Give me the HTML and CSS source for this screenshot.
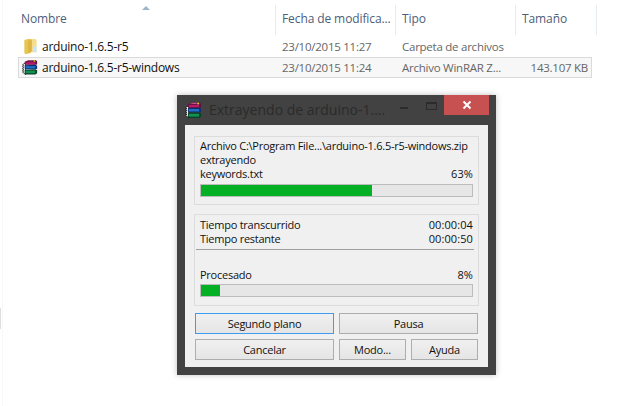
FILE: index.html
```html
<!DOCTYPE html>
<html lang="es">
  <head>
    <meta charset="utf-8" />
    <title>Extrayendo de arduino-1.6.5-r5-windows.zip</title>
    <link rel="stylesheet" href="styles.css">
  </head>
  <body>
    <svg class="defs" width="0" height="0">
      <symbol id="rar" viewBox="0 0 18 18">
        <path d="M2 5 L0.5 6 L2 7 L0.5 8 L2 9 L0.5 10 L2 11 L0.5 12 L2 13 L0.5 14 L4 17 V4 Z" fill="#fff" stroke="#111" stroke-width=".9"/>
        <path d="M3 2.500 L8 .5 H15.500 L17 2 V5.500 L15 6 H4 L3 5 Z" fill="#5c1040"/>
        <path d="M5 1.800 L8.500 .8 H14.500 L11 2 Z" fill="#c85a8c"/>
        <path d="M4 3 H15 V5.500 H4 Z" fill="#b81a68"/>
        <path d="M3 6.500 L15 6 L17 7 V10.500 L15 11 H4 L3 10 Z" fill="#0c2f70"/>
        <path d="M4 7.500 H15 V10 H4 Z" fill="#2270c8"/>
        <path d="M3 11.500 L15 11 L17 12 V15.500 L15 17 H4 L3 16 Z" fill="#0a4028"/>
        <path d="M4 12.500 H15 V15.500 H4 Z" fill="#149050"/>
        <path d="M13 .8 H15 V2.500 H13 Z" fill="#e8c820"/>
      </symbol>
    </svg>

    <div class="edge"></div>
    <div class="edge-mark"></div>

    <div class="explorer">
      <div class="sort-arrow"></div>
      <div class="row header">
        <div class="col col-name">Nombre</div>
        <div class="col col-date">Fecha de modifica...</div>
        <div class="col col-type">Tipo</div>
        <div class="col col-size">Tamaño</div>
      </div>
      <div class="row file">
        <div class="col col-name">
          <svg class="file-icon" viewBox="0 0 16 18">
            <path d="M2 2 L6 1 H9 V16 L4 17 H3 L2 16 Z" fill="#e8c552"/>
            <path d="M9 1 H14 L15 3 V15 H9 Z" fill="#f4dd8c"/>
            <path d="M6 3 L10 1.500 V14 L6 16 Z" fill="#dcb545"/>
            <path d="M11 9 H15 V15 H11 Z" fill="#cfe4f2"/>
          </svg>
          <span>arduino-1.6.5-r5</span>
        </div>
        <div class="col col-date">23/10/2015 11:27</div>
        <div class="col col-type">Carpeta de archivos</div>
        <div class="col col-size"></div>
      </div>
      <div class="row file selected">
        <div class="col col-name">
          <svg class="file-icon"><use href="#rar"/></svg>
          <span>arduino-1.6.5-r5-windows</span>
        </div>
        <div class="col col-date">23/10/2015 11:24</div>
        <div class="col col-type">Archivo WinRAR Z...</div>
        <div class="col col-size">143.107 KB</div>
      </div>
    </div>

    <div class="window">
      <div class="titlebar">
        <svg class="title-icon"><use href="#rar"/></svg>
        <div class="title">Extrayendo de arduino-1....</div>
        <div class="win-min"></div>
        <div class="win-max"></div>
        <div class="win-close">
          <svg viewBox="0 0 10 10" width="10" height="10">
            <path d="M1.500 1.500 L8.500 8.500 M8.500 1.500 L1.500 8.500" stroke="#fff" stroke-width="2"/>
          </svg>
        </div>
      </div>
      <div class="client">
        <div class="group group-file">
          <div class="line">Archivo C:\Program File...\arduino-1.6.5-r5-windows.zip</div>
          <div class="line">extrayendo</div>
          <div class="line between"><span>keywords.txt</span><span>63%</span></div>
          <div class="progress"><div class="progress-fill" style="width: 63%"></div></div>
        </div>
        <div class="group group-time">
          <div class="line between"><span>Tiempo transcurrido</span><span>00:00:04</span></div>
          <div class="line between"><span>Tiempo restante</span><span>00:00:50</span></div>
          <div class="divider"></div>
          <div class="line between"><span>Procesado</span><span>8%</span></div>
          <div class="progress"><div class="progress-fill" style="width: 7%"></div></div>
        </div>
        <div class="buttons">
          <button class="btn btn-wide btn-focus">Segundo plano</button>
          <button class="btn btn-wide">Pausa</button>
          <button class="btn btn-wide">Cancelar</button>
          <div class="btn-pair">
            <button class="btn">Modo...</button>
            <button class="btn">Ayuda</button>
          </div>
        </div>
      </div>
    </div>
  </body>
</html>
```

FILE: styles.css
```css
body {
  margin: 0;
  width: 623px;
  height: 406px;
  overflow: hidden;
  background-color: #fff;
  font-family: "Open Sans", sans-serif;
  font-size: 11.5px;
  letter-spacing: -0.25px;
  position: relative;
}

.defs {
  position: absolute;
}

/* leftovers of the navigation pane at the left edge */
.edge {
  position: absolute;
  left: 2px;
  top: 0;
  width: 1px;
  height: 406px;
  background-color: #f8f8f8;
}

.edge-mark {
  position: absolute;
  left: 0;
  top: 308px;
  width: 1px;
  height: 21px;
  background-color: #dedede;
}

/* explorer list behind the dialog */
.explorer {
  padding-left: 18px;
  width: 574px;
  color: #666;
}

.sort-arrow {
  position: absolute;
  left: 142px;
  top: 6px;
  border-left: 4px solid transparent;
  border-right: 4px solid transparent;
  border-bottom: 4px solid #9fb4c8;
}

.row {
  display: grid;
  grid-template-columns: 257px 120px 119px 76px;
  align-items: center;
}

.header {
  grid-template-columns: 258px 120px 120px 81px;
  height: 36px;
  color: #4c607a;
  font-size: 12px;
  letter-spacing: -0.1px;
}

.header .col {
  height: 30px;
  margin-top: 4px;
  line-height: 27px;
  padding-left: 6px;
  border-right: 1px solid #e6edf2;
  box-sizing: border-box;
}

.header .col-name {
  padding-left: 3px;
}

.file {
  height: 21px;
  box-sizing: border-box;
  border: 1px solid transparent;
}

.file .col-name {
  display: flex;
  align-items: center;
  color: #111;
  padding-left: 3px;
  font-size: 12px;
}

.file .col-date,
.file .col-type {
  padding-left: 6px;
}

.file .col-size {
  text-align: right;
  padding-right: 3px;
}

.selected {
  background-color: #f7f7f7;
  border-color: #dadada;
}

.file-icon {
  width: 16px;
  height: 17px;
  margin-right: 4px;
}

/* dialog */
.window {
  position: absolute;
  left: 177px;
  top: 95px;
  width: 319px;
  height: 280px;
  box-sizing: border-box;
  padding: 0 8px 8px;
  background-color: #424242;
  box-shadow: 0 0 6px rgba(0, 0, 0, 0.25);
  display: flex;
  flex-direction: column;
}

.titlebar {
  height: 30px;
  display: flex;
  align-items: flex-start;
  color: #2b2b2b;
}

.title-icon {
  width: 17px;
  height: 17px;
  margin-top: 7px;
  margin-right: 7px;
  flex-shrink: 0;
}

.title {
  font-size: 14px;
  letter-spacing: 0;
  line-height: 30px;
  width: 168px;
  white-space: nowrap;
}

.win-min {
  width: 8px;
  height: 2px;
  margin: 12px 18px 0 23px;
  background-color: #2b2b2b;
}

.win-max {
  width: 9px;
  height: 5px;
  margin-top: 7px;
  border: 1px solid #2b2b2b;
  border-top-width: 2px;
}

.win-close {
  width: 45px;
  height: 20px;
  margin-left: 7px;
  margin-right: -1px;
  background-color: #c75050;
  display: flex;
  align-items: center;
  justify-content: center;
}

.client {
  flex: 1;
  background-color: #f0f0f0;
  padding: 11px 9px 0;
  color: #111;
  font-size: 11px;
}

.group {
  border: 1px solid #dcdcdc;
  box-sizing: border-box;
  padding: 0 5px;
  width: 285px;
}

.group-file {
  height: 69px;
  padding-top: 2px;
}

.group-time {
  height: 92px;
  margin-top: 9px;
  padding-top: 3px;
}

.line {
  height: 14px;
  line-height: 14px;
  white-space: nowrap;
}

.between {
  display: flex;
  justify-content: space-between;
}

.between span:last-child {
  letter-spacing: 0.1px;
}

.divider {
  height: 1px;
  margin: 3px 0 18px -4px;
  width: 278px;
  background-color: #a0a0a0;
}

.progress {
  height: 13px;
  box-sizing: border-box;
  border: 1px solid #bcbcbc;
  background-color: #e6e6e6;
  margin-top: 2px;
}

.group-file .progress {
  margin-top: 3px;
}

.progress-fill {
  height: 100%;
  background-color: #06b025;
}

.buttons {
  display: grid;
  grid-template-columns: 139px 139px;
  grid-auto-rows: 21px;
  column-gap: 5px;
  row-gap: 5px;
  margin: 7px 0 0 1px;
}

.btn {
  font: inherit;
  letter-spacing: inherit;
  color: #111;
  padding: 0;
  box-sizing: border-box;
  border: 1px solid #adadad;
  background: linear-gradient(#f0f0f0, #e5e5e5);
}

.btn-focus {
  border-color: #3d9bf0;
}

.btn-pair {
  display: grid;
  grid-template-columns: 67px 67px;
  column-gap: 5px;
}
```
